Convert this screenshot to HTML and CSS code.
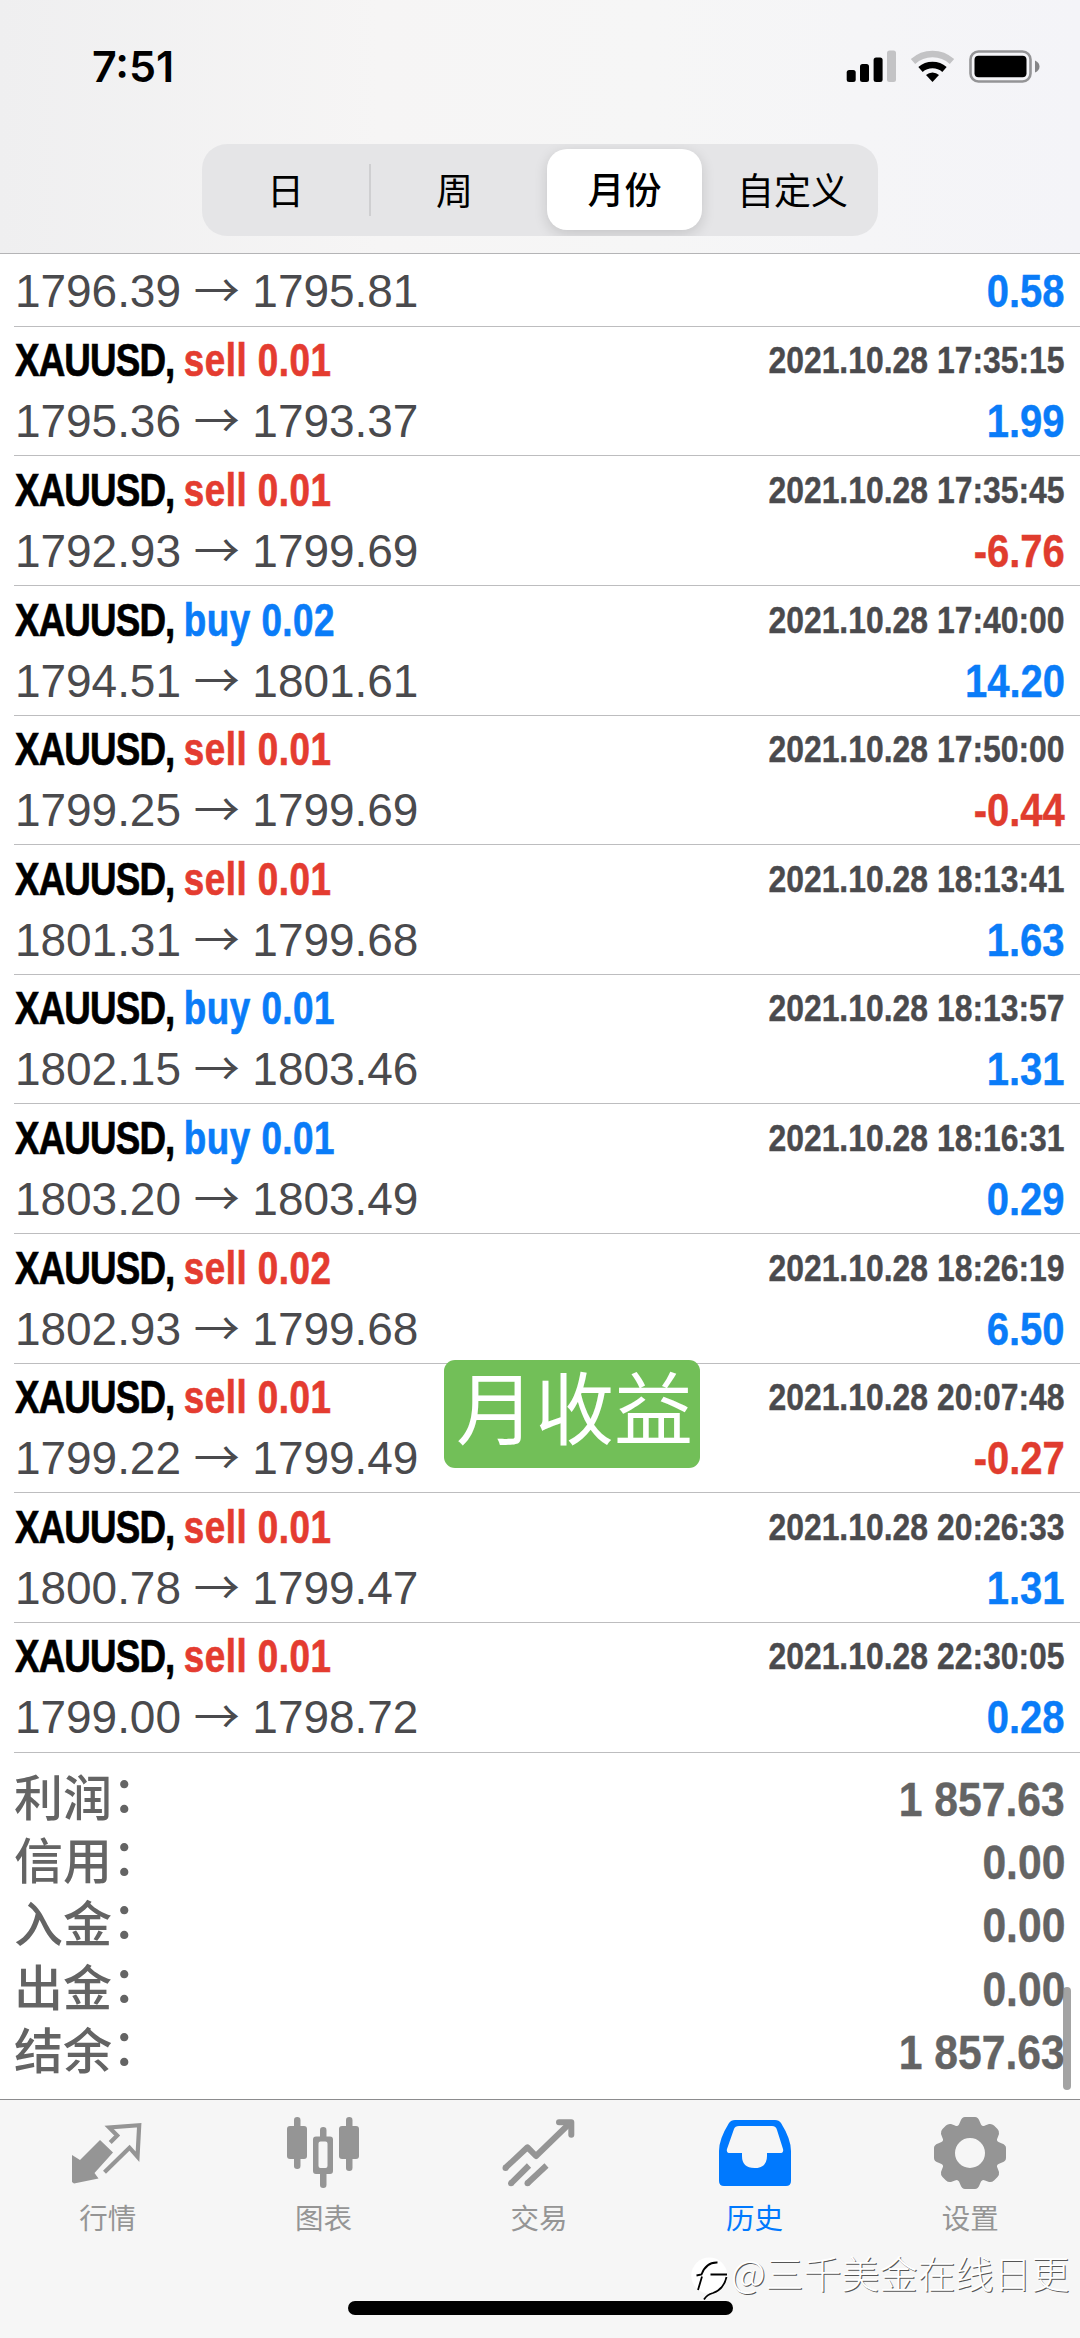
FILE: index.html
```html
<!DOCTYPE html>
<html lang="zh-CN">
<head>
<meta charset="utf-8">
<title>历史</title>
<link rel="stylesheet" href="styles.css">
</head>
<body>
<div class="screen">
  <header class="header">
    <div class="status">
      <span class="time">7:51</span>
      <svg class="status-icons" width="194" height="34" viewBox="846 49 194 34">
        <rect x="846.7" y="70" width="9" height="12" rx="2.5"/>
        <rect x="860" y="64" width="9" height="18" rx="2.5"/>
        <rect x="873.6" y="57.5" width="9" height="24.5" rx="2.5"/>
        <rect x="887" y="50.5" width="9" height="31.5" rx="2.5" fill="#c3c3c5"/>
        <path d="M913 61.5a29 29 0 0 1 39 0" fill="none" stroke="#c3c3c5" stroke-width="6.5"/>
        <path d="M920.5 69.5a18 18 0 0 1 24 0" fill="none" stroke="#000" stroke-width="6.5"/>
        <path d="M926 75a9.500 9.500 0 0 1 13 0l-6.500 7z"/>
        <rect x="970.500" y="51.500" width="60" height="30" rx="8" fill="none" stroke="#949496" stroke-width="2.600"/>
        <rect x="974.500" y="55.700" width="52" height="21.500" rx="4"/>
        <path d="M1035 60.500q4.500 2 4.500 6t-4.500 6z" fill="#858587"/>
      </svg>
    </div>
    <nav class="segments">
      <span class="segment first">日</span>
      <span class="segment">周</span>
      <span class="segment selected">月份</span>
      <span class="segment">自定义</span>
    </nav>
  </header>

  <main class="list">
    <div class="row partial">
      <div class="line"><span class="price">1796.39 <i>→</i> 1795.81</span><span class="value">0.58</span></div>
    </div>
    <div class="row">
      <div class="line"><span class="name">XAUUSD, <b class="sell">sell 0.01</b></span><span class="date">2021.10.28 17:35:15</span></div>
      <div class="line"><span class="price">1795.36 <i>→</i> 1793.37</span><span class="value">1.99</span></div>
    </div>
    <div class="row">
      <div class="line"><span class="name">XAUUSD, <b class="sell">sell 0.01</b></span><span class="date">2021.10.28 17:35:45</span></div>
      <div class="line"><span class="price">1792.93 <i>→</i> 1799.69</span><span class="value loss">-6.76</span></div>
    </div>
    <div class="row">
      <div class="line"><span class="name">XAUUSD, <b class="buy">buy 0.02</b></span><span class="date">2021.10.28 17:40:00</span></div>
      <div class="line"><span class="price">1794.51 <i>→</i> 1801.61</span><span class="value">14.20</span></div>
    </div>
    <div class="row">
      <div class="line"><span class="name">XAUUSD, <b class="sell">sell 0.01</b></span><span class="date">2021.10.28 17:50:00</span></div>
      <div class="line"><span class="price">1799.25 <i>→</i> 1799.69</span><span class="value loss">-0.44</span></div>
    </div>
    <div class="row">
      <div class="line"><span class="name">XAUUSD, <b class="sell">sell 0.01</b></span><span class="date">2021.10.28 18:13:41</span></div>
      <div class="line"><span class="price">1801.31 <i>→</i> 1799.68</span><span class="value">1.63</span></div>
    </div>
    <div class="row">
      <div class="line"><span class="name">XAUUSD, <b class="buy">buy 0.01</b></span><span class="date">2021.10.28 18:13:57</span></div>
      <div class="line"><span class="price">1802.15 <i>→</i> 1803.46</span><span class="value">1.31</span></div>
    </div>
    <div class="row">
      <div class="line"><span class="name">XAUUSD, <b class="buy">buy 0.01</b></span><span class="date">2021.10.28 18:16:31</span></div>
      <div class="line"><span class="price">1803.20 <i>→</i> 1803.49</span><span class="value">0.29</span></div>
    </div>
    <div class="row">
      <div class="line"><span class="name">XAUUSD, <b class="sell">sell 0.02</b></span><span class="date">2021.10.28 18:26:19</span></div>
      <div class="line"><span class="price">1802.93 <i>→</i> 1799.68</span><span class="value">6.50</span></div>
    </div>
    <div class="row">
      <div class="line"><span class="name">XAUUSD, <b class="sell">sell 0.01</b></span><span class="date">2021.10.28 20:07:48</span></div>
      <div class="line"><span class="price">1799.22 <i>→</i> 1799.49</span><span class="value loss">-0.27</span></div>
    </div>
    <div class="row">
      <div class="line"><span class="name">XAUUSD, <b class="sell">sell 0.01</b></span><span class="date">2021.10.28 20:26:33</span></div>
      <div class="line"><span class="price">1800.78 <i>→</i> 1799.47</span><span class="value">1.31</span></div>
    </div>
    <div class="row">
      <div class="line"><span class="name">XAUUSD, <b class="sell">sell 0.01</b></span><span class="date">2021.10.28 22:30:05</span></div>
      <div class="line"><span class="price">1799.00 <i>→</i> 1798.72</span><span class="value">0.28</span></div>
    </div>
    <div class="summary">
      <div class="total"><span class="label">利润<i>：</i></span><span class="amount">1 857.63</span></div>
      <div class="total"><span class="label">信用<i>：</i></span><span class="amount">0.00</span></div>
      <div class="total"><span class="label">入金<i>：</i></span><span class="amount">0.00</span></div>
      <div class="total"><span class="label">出金<i>：</i></span><span class="amount">0.00</span></div>
      <div class="total"><span class="label">结余<i>：</i></span><span class="amount">1 857.63</span></div>
    </div>
  </main>

  <footer class="tabbar">
    <div class="tab">
      <svg class="icon" viewBox="0 0 72 72">
        <path d="M0 38l8 5 20-20 13 12.500-18.500 20.500 4 5.500-24.500 5-2-1.500z"/>
        <path d="M38.200 25.500l7-7-8-8 30-2.300-1.700 31.500-8-9-25 24.500" fill="none" stroke="currentColor" stroke-width="4.200"/>
      </svg>
      <span>行情</span>
    </div>
    <div class="tab">
      <svg class="icon" viewBox="0 0 72 72">
        <rect y="9" width="20" height="33" rx="3"/>
        <rect x="7" width="6.500" height="52" rx="3.200"/>
        <rect x="52" y="9" width="20" height="33" rx="3"/>
        <rect x="59" width="6.500" height="54" rx="3.200"/>
        <rect x="33" y="10" width="6.500" height="14" rx="3.200"/>
        <rect x="33" y="54" width="6.500" height="17" rx="3.200"/>
        <path fill-rule="evenodd" d="M29 19.500h14q3 0 3 3v31.500q0 3-3 3h-14q-3 0-3-3v-31.500q0-3 3-3zM33.500 24.500q-2 0-2 2v22.500q0 2 2 2h5q2 0 2-2v-22.500q0-2-2-2z"/>
      </svg>
      <span>图表</span>
    </div>
    <div class="tab">
      <svg class="icon" viewBox="0 0 72 72">
        <g fill="none" stroke="currentColor" stroke-width="6">
          <path d="M2 51.300l22.500-21 8.500 8.700 34-33" stroke-linejoin="round"/>
          <path d="M56 5.200h12.300v12.500" stroke-linecap="round" stroke-linejoin="round"/>
          <path d="M8 66.300l18-17.800M24.500 66.300l19-17.800"/>
        </g>
        <circle cx="2.500" cy="51" r="3"/><circle cx="8" cy="66.300" r="3"/><circle cx="24.500" cy="66.300" r="3"/>
      </svg>
      <span>交易</span>
    </div>
    <div class="tab active">
      <svg class="icon" viewBox="0 0 72 72">
        <path fill-rule="evenodd" d="M16 3H56Q60 3 62 6Q72 22 72 34V64Q72 69 67 69H5Q0 69 0 64V34Q0 22 10 6Q12 3 16 3ZM20 9Q16 9 15 12L8 32Q7 36 11 36H23V39Q23 51 35.500 51Q48 51 48 39V36H61Q65 36 64 32L58 13Q57 9 53 9Z"/>
      </svg>
      <span>历史</span>
    </div>
    <div class="tab">
      <svg class="icon" viewBox="-36 -36 72 72">
        <path fill-rule="evenodd" d="M-5 -36H5Q8 -36 9.500 -32L11 -28.500Q12.500 -26 15 -27.500L19 -29Q22 -29.500 24 -27.500L27.500 -24Q29.500 -22 29 -19L27.500 -15Q26 -12.500 28.500 -11L32 -9.500Q36 -8 36 -5V5Q36 8 32 9.500L28.500 11Q26 12.500 27.500 15L29 19Q29.500 22 27.500 24L24 27.500Q22 29.500 19 29L15 27.500Q12.500 26 11 28.500L9.500 32Q8 36 5 36H-5Q-8 36 -9.500 32L-11 28.500Q-12.500 26 -15 27.500L-19 29Q-22 29.500 -24 27.500L-27.500 24Q-29.500 22 -29 19L-27.500 15Q-26 12.500 -28.500 11L-32 9.500Q-36 8 -36 5V-5Q-36 -8 -32 -9.500L-28.500 -11Q-26 -12.500 -27.500 -15L-29 -19Q-29.500 -22 -27.500 -24L-24 -27.500Q-22 -29.500 -19 -29L-15 -27.500Q-12.500 -26 -11 -28.500L-9.500 -32Q-8 -36 -5 -36ZM0 -15A15 15 0 1 0 0 15A15 15 0 1 0 0 -15Z"/>
      </svg>
      <span>设置</span>
    </div>
  </footer>

  <div class="badge">月收益</div>
  <div class="scrollbar"></div>
  <div class="home"></div>
  <div class="watermark">
    <svg width="40" height="46" viewBox="0 0 40 46">
      <circle cx="19.300" cy="20.500" r="18" fill="#fff"/>
      <path d="M6.500 20.500l5-1Q16 7 27.500 7.500M12 21.500L8 35M20.500 19.500h16.500M36.500 22Q34 34 23 38Q17 39.500 14 44.500" fill="none" stroke="#000" stroke-width="1.800"/>
    </svg>
    <span>@三千美金在线日更</span>
  </div>
</div>
</body>
</html>
```
FILE: styles.css
```css
* { box-sizing: border-box; }

body {
  margin: 0;
  background: #fff;
  font-family: "Liberation Sans", "Noto Sans CJK SC", sans-serif;
}

.screen {
  position: relative;
  display: flex;
  flex-direction: column;
  width: 1080px;
  height: 2338px;
  overflow: hidden;
}

/* header */
.header {
  height: 254px;
  border-bottom: 1px solid #b4b4b6;
  background: linear-gradient(90deg, #efeff0, #f6f5f5 35%, #f6f6f6 60%, #f4f4f8);
}

.status {
  display: flex;
  justify-content: space-between;
  align-items: center;
  height: 144px;
  padding: 0 40px 12px 92px;
}

.time { font: 600 43px/1 Inter, sans-serif; }
.status-icons { display: block; }

.segments {
  display: grid;
  grid-template-columns: repeat(4, 1fr);
  width: 676px;
  height: 92px;
  margin-left: 202px;
  border-radius: 25px;
  background: #e5e5e7;
  font: 400 37px/1 "Noto Sans CJK SC", sans-serif;
  overflow: hidden;
}

.segment {
  display: flex;
  align-items: center;
  justify-content: center;
  padding: 0 2px 2px 0;
}

.segment.first {
  background: linear-gradient(#cfcfd1, #cfcfd1) right center / 2px 52px no-repeat;
}

.segment.selected {
  margin: 5px 7px 6px 7px;
  padding-right: 0;
  border-radius: 20px;
  background: #fff;
  box-shadow: 0 4px 14px rgba(0, 0, 0, .14);
  font-weight: 500;
}

/* trade rows */
.list { height: 1844.500px; }

.row {
  height: 129.620px;
  margin-left: 14px;
  padding: 3.500px 15px 0 1px;
  border-bottom: 1px solid #bdbdbf;
}

.row.partial { height: 72.800px; padding-top: 7px; }

.line {
  display: flex;
  justify-content: space-between;
  height: 61px;
  line-height: 61px;
  font-size: 46px;
  white-space: nowrap;
}

.name {
  font-weight: 700;
  letter-spacing: -1.100px;
  transform: scaleX(.8);
  transform-origin: left;
  -webkit-text-stroke: .7px currentColor;
}

.name b { letter-spacing: .6px; }
.sell { color: #e43c30; }
.buy { color: #0a7cf8; }

.price { color: #4a4a4d; letter-spacing: -.05px; }
.price i { font-style: normal; font-family: "Noto Sans CJK SC", sans-serif; line-height: 1; }

.date, .value, .amount {
  font-weight: 700;
  transform: scaleX(.87);
  transform-origin: right;
  -webkit-text-stroke: .4px currentColor;
}

.date { color: #4a4a4d; font-size: 37px; transform: scaleX(.862); }
.value { color: #0a7cf8; }
.value.loss { color: #e03c2e; }

/* account totals */
.summary { padding: 15px 15px 0 14px; color: #646464; }

.total {
  display: flex;
  justify-content: space-between;
  height: 63.400px;
  line-height: 63.400px;
  font-size: 49px;
}

.label { font-weight: 500; }
.label i { position: relative; top: -4px; font-style: normal; }

/* tab bar */
.tabbar {
  display: grid;
  grid-template-columns: repeat(5, 1fr);
  flex: 1;
  padding-right: 2px;
  border-top: 1px solid #8c8c8e;
  background: #f6f6f6;
  color: #959595;
}

.tab {
  display: flex;
  flex-direction: column;
  align-items: center;
  padding-top: 17px;
  font: 400 28.500px/1 "Noto Sans CJK SC", sans-serif;
}

.tab span { margin-top: 14px; }
.tab.active { color: #0079fe; }
.icon { display: block; width: 72px; height: 72px; fill: currentColor; overflow: visible; }

/* overlays */
.badge {
  position: absolute;
  left: 444px;
  top: 1360px;
  width: 256px;
  height: 108px;
  padding-left: 12px;
  border-radius: 11px;
  background: #72bf58;
  color: #fff;
  font: 400 79px/90px "Noto Sans CJK SC", sans-serif;
}

.scrollbar {
  position: absolute;
  left: 1063px;
  top: 1987px;
  width: 8px;
  height: 103px;
  border-radius: 4px;
  background: rgba(140, 140, 140, .8);
}

.home {
  position: absolute;
  left: 348px;
  top: 2301px;
  width: 385px;
  height: 14px;
  border-radius: 7px;
  background: #000;
}

.watermark {
  position: absolute;
  left: 690px;
  top: 2255px;
  display: flex;
  color: #fff;
  font: 300 38px/34px "Noto Sans CJK SC", sans-serif;
  text-shadow: 1px 1px 0 #555;
  white-space: nowrap;
}

.watermark span { margin-left: 1px; }
```
